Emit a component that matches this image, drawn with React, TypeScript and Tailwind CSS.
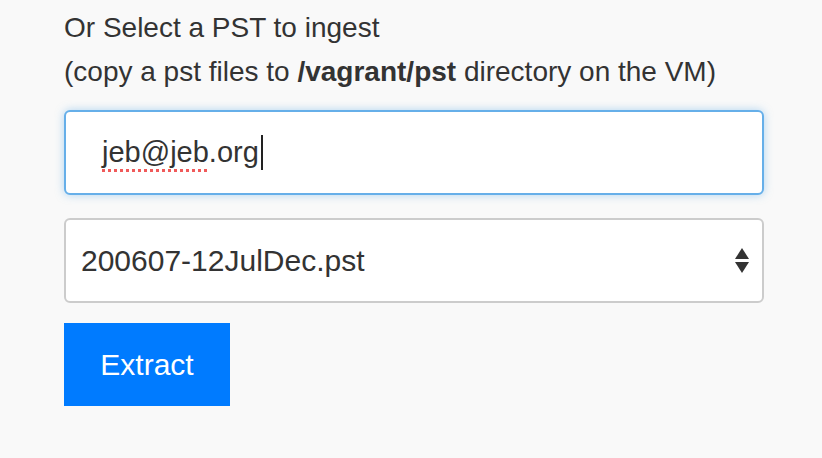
export default function App() {
  return (
    <div
      className="min-h-[458px] w-full bg-[#f9f9f9] px-16 pt-[6px] text-[#333]"
      style={{ fontFamily: '"Liberation Sans", Arial, sans-serif' }}
    >
      <div className="w-[700px]">
        {/* Heading */}
        <p className="text-[28px] leading-[44px]">Or Select a PST to ingest</p>
        <p className="text-[28px] leading-[44px]">
          (copy a pst files to <b>/vagrant/pst</b> directory on the VM)
        </p>

        {/* Email field (focused) */}
        <div className="mt-[16px] flex h-[85px] items-center rounded-[6px] border-2 border-[#66afe9] bg-white pl-[36px] text-[29px] shadow-[0_0_8px_rgba(102,175,233,0.5)]">
          <span className="underline decoration-dotted decoration-[#f05a5a] decoration-[3px] underline-offset-[7px]">
            jeb@jeb
          </span>
          <span>.org</span>
          <span className="ml-[2px] inline-block h-[35px] w-[2px] bg-[#222]" />
        </div>

        {/* PST select */}
        <div className="mt-[23px] flex h-[85px] items-center justify-between rounded-[6px] border-2 border-[#ccc] bg-white pl-[15px] pr-[12px] text-[30px]">
          <span>200607-12JulDec.pst</span>
          <svg width="16" height="28" viewBox="0 0 16 28" className="fill-[#333]">
            <path d="M8 1 L15 12 L1 12 Z" />
            <path d="M1 15 L15 15 L8 26 Z" />
          </svg>
        </div>

        {/* Action */}
        <button className="mt-[20px] flex h-[83px] w-[166px] items-center justify-center bg-[#007bff] text-[30px] text-white">
          Extract
        </button>
      </div>
    </div>
  );
}
